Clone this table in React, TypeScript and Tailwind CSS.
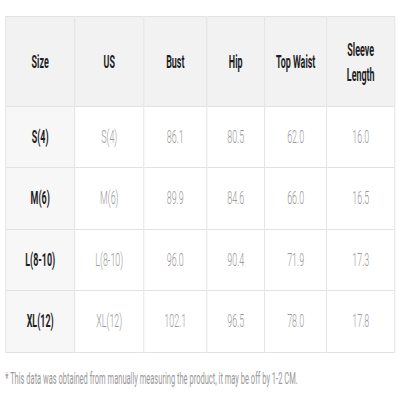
import React from 'react';

const headers = ['Size', 'US', 'Bust', 'Hip', 'Top Waist', 'Sleeve Length'];
const widths = ['w-[147px]', 'w-[147px]', 'w-[134px]', 'w-[123px]', 'w-[132px]', 'w-[145px]'];

const rows = [
  ['S(4)', 'S(4)', '86.1', '80.5', '62.0', '16.0'],
  ['M(6)', 'M(6)', '89.9', '84.6', '66.0', '16.5'],
  ['L(8-10)', 'L(8-10)', '96.0', '90.4', '71.9', '17.3'],
  ['XL(12)', 'XL(12)', '102.1', '96.5', '78.0', '17.8'],
];

const rowHeights = ['h-[61px]', 'h-[62px]', 'h-[61px]', 'h-[62px]'];

export default function App() {
  return (
    <div className="w-[400px] h-[400px] overflow-hidden bg-white">
      {/* the source image is horizontally squeezed, so lay out wide and squash it */}
      <div
        className="w-[851px] h-[400px] origin-top-left scale-x-[0.47] pt-[16px] pl-[11px]"
        style={{ fontFamily: 'Roboto, "Liberation Sans", sans-serif' }}
      >
        <table className="border-collapse table-fixed w-[828px]">
          <thead>
            <tr className="h-[90px] bg-[#f2f2f2]">
              {headers.map((h, i) => (
                <th
                  key={h}
                  className={`${widths[i]} border-y border-x-2 border-[#e2e2e2] text-[19px] leading-[25px] font-bold text-[#1e1e1e] text-center align-middle px-2`}
                >
                  {h === 'Sleeve Length' ? (
                    <>
                      Sleeve
                      <br />
                      Length
                    </>
                  ) : (
                    h
                  )}
                </th>
              ))}
            </tr>
          </thead>
          <tbody>
            {rows.map((r, ri) => (
              <tr key={r[0]} className={rowHeights[ri]}>
                {r.map((c, ci) => (
                  <td
                    key={ci}
                    className={`border-y border-x-2 border-[#e2e2e2] text-[19px] text-center align-middle ${
                      ci === 0 ? 'bg-[#f7f7f7] font-bold text-[#1e1e1e]' : 'font-light text-[#999]'
                    }`}
                  >
                    {c}
                  </td>
                ))}
              </tr>
            ))}
          </tbody>
        </table>
        <p className="mt-[16px] text-[16px] leading-[20px] text-[#999]">
          * This data was obtained from manually measuring the product, it may be off by 1-2 CM.
        </p>
      </div>
    </div>
  );
}
